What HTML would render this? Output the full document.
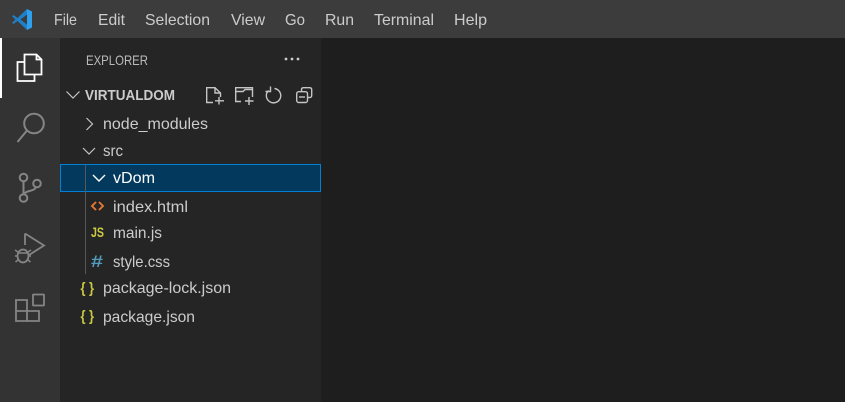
<!DOCTYPE html>
<html>
<head>
<meta charset="utf-8">
<style>
html,body{margin:0;padding:0;background:#1e1e1e;width:845px;height:402px;overflow:hidden}
svg{display:block}
text{font-family:"Liberation Sans",sans-serif;font-size:16px}
.m{fill:#cccccc}
.t{fill:#cccccc}
</style>
</head>
<body>
<svg width="845" height="402" viewBox="0 0 845 402" xmlns="http://www.w3.org/2000/svg">
<rect width="845" height="402" fill="#1e1e1e"/>
<rect width="845" height="38" fill="#3c3c3c"/>
<rect y="38" width="60" height="364" fill="#333333"/>
<rect x="60" y="38" width="261" height="364" fill="#252526"/>
<rect y="38" width="2" height="60" fill="#ffffff"/>

<!-- logo -->
<path d="M27 9 L32 11.500 V27.500 L27 30 Z" fill="#2ea0ee"/>
<path d="M27 9 L17.500 18 L13.500 15 L12 16.200 L15.500 19.500 L12 22.800 L13.500 24 L17.500 21 L27 30 V24.500 L20.500 19.500 L27 14.500 Z" fill="#1f80c8"/>

<!-- menu -->
<text class="m" x="54" y="25" textLength="23" lengthAdjust="spacingAndGlyphs">File</text>
<text class="m" x="98" y="25" textLength="27" lengthAdjust="spacingAndGlyphs">Edit</text>
<text class="m" x="145" y="25" textLength="65" lengthAdjust="spacingAndGlyphs">Selection</text>
<text class="m" x="231" y="25" textLength="34" lengthAdjust="spacingAndGlyphs">View</text>
<text class="m" x="285" y="25" textLength="20" lengthAdjust="spacingAndGlyphs">Go</text>
<text class="m" x="325" y="25" textLength="29" lengthAdjust="spacingAndGlyphs">Run</text>
<text class="m" x="374" y="25" textLength="60" lengthAdjust="spacingAndGlyphs">Terminal</text>
<text class="m" x="454" y="25" textLength="33" lengthAdjust="spacingAndGlyphs">Help</text>

<!-- activity icons -->
<g fill="none" stroke="#ffffff" stroke-width="1.800">
<path d="M24.500 62 H17.500 V81 H34.500 V75"/>
<path d="M24.500 54.500 H36.500 L41.500 59.500 V74.500 H24.500 Z" fill="#333333"/>
<path d="M36.500 54.500 V59.500 H41.500"/>
</g>
<g fill="none" stroke="#858585" stroke-width="2">
<circle cx="34" cy="123.500" r="9.800"/>
<path d="M27 130.500 L17.500 142"/>
<circle cx="23.500" cy="177.500" r="3.800"/>
<circle cx="23.500" cy="198" r="3.800"/>
<circle cx="37" cy="183.500" r="3.800"/>
<path d="M23.500 181.500 V194"/>
<path d="M24 194 C26 190 34 192 36 187"/>
<path d="M25 233.500 L44 245.500 L29 255 M25 233.500 V245" stroke-width="1.800"/>
<ellipse cx="23" cy="256" rx="5.500" ry="6.500" stroke-width="1.800"/>
<path d="M18 253 H28 M15 250 L18 252 M31 250 L28 252 M15 256 H18 M28 256 H31 M15.500 262 L18 260 M30.500 262 L28 260" stroke-width="1.500"/>
<path d="M16 300 H27 V321 H16 Z M16 311 H39 V321 H27" stroke-width="1.800"/>
<rect x="33" y="294.500" width="11" height="11" rx="0.500" stroke-width="1.800"/>
</g>

<!-- explorer header -->
<text x="86" y="65" style="font-size:14px" fill="#bbbbbb" textLength="62" lengthAdjust="spacingAndGlyphs">EXPLORER</text>
<g fill="#cccccc"><circle cx="286" cy="59" r="1.400"/><circle cx="292" cy="59" r="1.400"/><circle cx="298" cy="59" r="1.400"/></g>

<path d="M66.500 91.500 L73 98 L79.500 91.500" fill="none" stroke="#c5c5c5" stroke-width="1.200"/>
<text x="85" y="100" style="font-size:14.500px;font-weight:700" fill="#cccccc" textLength="90" lengthAdjust="spacingAndGlyphs">VIRTUALDOM</text>

<!-- toolbar icons -->
<g fill="none" stroke="#c5c5c5" stroke-width="1.400">
<path d="M213 102.500 H206.700 V87.700 H215 L220.500 93 V97 M215 87.700 V93 H220.500"/>
<path d="M219 97 V104.500 M215 100.800 H224"/>
<path d="M241 101.500 H235.700 V87.700 H252.500 V97 M235.700 91.500 H243 L245 89.500 H252.500"/>
<path d="M249 97 V105 M245 101 H253.500"/>
<path d="M268.500 90.500 A7.200 7.200 0 1 0 274.500 88.500"/>
<path d="M270.500 86.500 L270.500 91.500 L265.500 91.500"/>
<path d="M301.500 91.500 V89.500 Q301.500 87.700 303.500 87.700 H309.500 Q311.700 87.700 311.700 89.700 V95.500 Q311.700 97.500 309.500 97.500 H307.500"/>
<rect x="296.700" y="91.700" width="10.800" height="10.800" rx="2"/>
<path d="M299 97 H305"/>
</g>

<!-- selected row -->
<rect x="60.500" y="164.500" width="260" height="27" fill="#04395e" stroke="#007fd4" stroke-width="1"/>

<!-- indent guide -->
<rect x="85" y="165" width="1" height="109" fill="#585858"/>

<!-- tree -->
<path d="M86.500 118 L92.500 124 L86.500 130" fill="none" stroke="#c5c5c5" stroke-width="1.200"/>
<text class="t" x="103" y="129" textLength="105" lengthAdjust="spacingAndGlyphs">node_modules</text>

<path d="M83 148 L89 154 L95 148" fill="none" stroke="#c5c5c5" stroke-width="1.200"/>
<text class="t" x="103" y="156" textLength="20" lengthAdjust="spacingAndGlyphs">src</text>

<path d="M93 175 L99 181 L105 175" fill="none" stroke="#ffffff" stroke-width="1.400"/>
<text x="113" y="183" fill="#ffffff" textLength="42" lengthAdjust="spacingAndGlyphs">vDom</text>

<path d="M96 202 L92 206 L96 210 M99 202 L103 206 L99 210" fill="none" stroke="#e37933" stroke-width="1.900"/>
<text class="t" x="113" y="212" textLength="75" lengthAdjust="spacingAndGlyphs">index.html</text>

<text x="91" y="237" style="font-size:13.500px;font-weight:700" fill="#cbcb41" textLength="13" lengthAdjust="spacingAndGlyphs">JS</text>
<text class="t" x="113" y="238" textLength="49" lengthAdjust="spacingAndGlyphs">main.js</text>

<text x="91" y="267" style="font-size:17px;font-weight:700" fill="#519aba" textLength="12" lengthAdjust="spacingAndGlyphs">#</text>
<text class="t" x="113" y="267" textLength="57" lengthAdjust="spacingAndGlyphs">style.css</text>

<text x="80.500" y="293" style="font-size:15px;font-weight:700" fill="#cbcb41" textLength="5" lengthAdjust="spacingAndGlyphs">{</text>
<text x="89" y="293" style="font-size:15px;font-weight:700" fill="#cbcb41" textLength="5" lengthAdjust="spacingAndGlyphs">}</text>
<text class="t" x="103" y="293" textLength="128" lengthAdjust="spacingAndGlyphs">package-lock.json</text>

<text x="80.500" y="321" style="font-size:15px;font-weight:700" fill="#cbcb41" textLength="5" lengthAdjust="spacingAndGlyphs">{</text>
<text x="89" y="321" style="font-size:15px;font-weight:700" fill="#cbcb41" textLength="5" lengthAdjust="spacingAndGlyphs">}</text>
<text class="t" x="103" y="322" textLength="92" lengthAdjust="spacingAndGlyphs">package.json</text>
</svg>
</body>
</html>
